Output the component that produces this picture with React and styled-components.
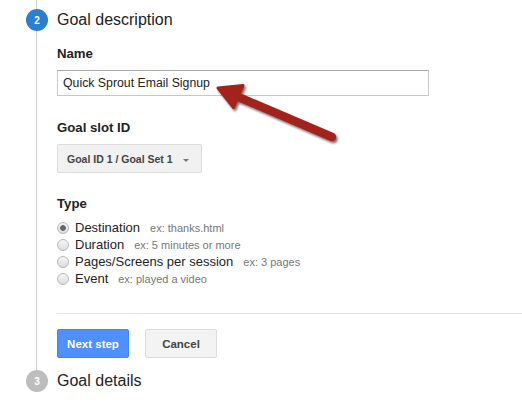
import styled, { createGlobalStyle } from 'styled-components'

const GlobalStyle = createGlobalStyle`
  html, body {
    margin: 0;
    padding: 0;
    background: #fff;
  }
  body {
    font-family: 'Liberation Sans', Arial, sans-serif;
    color: #222;
  }
`

const types = [
  { label: 'Destination', hint: 'ex: thanks.html', checked: true },
  { label: 'Duration', hint: 'ex: 5 minutes or more' },
  { label: 'Pages/Screens per session', hint: 'ex: 3 pages' },
  { label: 'Event', hint: 'ex: played a video' },
]

const Arrow = () => (
  <S.ArrowSvg width="522" height="404" viewBox="0 0 522 404">
    <defs>
      <filter id="shadow" x="-20%" y="-20%" width="140%" height="140%">
        <feDropShadow dx="1.5" dy="2" stdDeviation="1.3" floodColor="#000" floodOpacity="0.55" />
      </filter>
    </defs>
    <g filter="url(#shadow)" fill="#a3231f" stroke="#a3231f">
      <line x1="332" y1="137" x2="236" y2="96" strokeWidth="8.5" strokeLinecap="round" />
      <polygon points="218,88 243,85.6 233.5,107.6" strokeWidth="3" strokeLinejoin="round" />
    </g>
  </S.ArrowSvg>
)

export default () => {
  return (
    <S.Page>
      <GlobalStyle />
      <S.Stub />
      <S.StepHeader>
        <S.Circle active>2</S.Circle>
        <S.StepTitle>Goal description</S.StepTitle>
      </S.StepHeader>
      <S.StepBody>
        <S.Label>Name</S.Label>
        <S.Input>Quick Sprout Email Signup</S.Input>

        <S.Label top={24}>Goal slot ID</S.Label>
        <S.Select>
          <span>Goal ID 1 / Goal Set 1</span>
          <S.Caret />
        </S.Select>

        <S.Label top={23}>Type</S.Label>
        <S.RadioList>
          {types.map((t) => (
            <S.RadioRow key={t.label}>
              <S.Radio checked={t.checked} />
              <S.RadioLabel>{t.label}</S.RadioLabel>
              <S.Hint>{t.hint}</S.Hint>
            </S.RadioRow>
          ))}
        </S.RadioList>

        <S.Divider />

        <S.Buttons>
          <S.Button primary>Next step</S.Button>
          <S.Button>Cancel</S.Button>
        </S.Buttons>
      </S.StepBody>
      <S.StepHeader>
        <S.Circle>3</S.Circle>
        <S.StepTitle>Goal details</S.StepTitle>
      </S.StepHeader>
      <Arrow />
    </S.Page>
  )
}

const S = {
  Page: styled.div`
    position: relative;
    width: 522px;
    height: 404px;
    overflow: hidden;
  `,
  Stub: styled.div`
    height: 9px;
    margin-left: 36px;
    border-left: 1px solid #cfcfcf;
  `,
  StepHeader: styled.div`
    display: flex;
    align-items: center;
    height: 22px;
    padding-left: 26px;
  `,
  Circle: styled.div`
    width: 22px;
    height: 22px;
    border-radius: 50%;
    background: ${(props) => (props.active ? '#2a7fd2' : '#bdbdbd')};
    color: #fff;
    font-size: 10px;
    font-weight: bold;
    display: flex;
    align-items: center;
    justify-content: center;
    flex-shrink: 0;
  `,
  StepTitle: styled.div`
    margin-left: 9px;
    font-size: 16px;
    color: #222;
    line-height: 22px;
  `,
  StepBody: styled.div`
    margin-left: 36px;
    border-left: 1px solid #cfcfcf;
    padding: 15px 0 12px 20px;
    display: flex;
    flex-direction: column;
  `,
  Label: styled.div`
    margin-top: ${(props) => props.top || 0}px;
    margin-bottom: 8px;
    font-size: 13.2px;
    font-weight: bold;
    line-height: 16px;
    color: #222;
  `,
  Input: styled.div`
    box-sizing: border-box;
    width: 372px;
    height: 26px;
    border: 1px solid #c8c8c8;
    border-top-color: #a8a8a8;
    padding: 0 5px;
    font-size: 12.3px;
    line-height: 24px;
    color: #222;
  `,
  Select: styled.div`
    box-sizing: border-box;
    width: 145px;
    height: 29px;
    display: flex;
    align-items: center;
    justify-content: space-between;
    padding: 0 12px 0 9px;
    background: #f1f1f1;
    border: 1px solid #dcdcdc;
    border-radius: 2px;
    font-size: 10.5px;
    font-weight: bold;
    color: #444;
  `,
  Caret: styled.span`
    width: 0;
    height: 0;
    border-left: 3.5px solid transparent;
    border-right: 3.5px solid transparent;
    border-top: 3.5px solid #777;
    margin-top: 3px;
  `,
  RadioList: styled.div`
    display: flex;
    flex-direction: column;
    margin-top: -1px;
  `,
  RadioRow: styled.div`
    display: flex;
    align-items: baseline;
    height: 17px;
    line-height: 17px;
  `,
  Radio: styled.span`
    box-sizing: border-box;
    width: 12px;
    height: 12px;
    border-radius: 50%;
    border: 1px solid #b8b8b8;
    background: ${(props) =>
      props.checked
        ? 'radial-gradient(circle, #666 0, #666 2.5px, transparent 3.2px), linear-gradient(#f6f6f6, #dcdcdc)'
        : 'linear-gradient(#f6f6f6, #dcdcdc)'};
    align-self: center;
    flex-shrink: 0;
    margin-right: 6px;
  `,
  RadioLabel: styled.span`
    font-size: 13px;
    color: #222;
  `,
  Hint: styled.span`
    margin-left: 10px;
    font-size: 11px;
    color: #777;
  `,
  Divider: styled.div`
    margin-top: 26px;
    height: 1px;
    background: #e5e5e5;
    margin-right: -20px;
  `,
  Buttons: styled.div`
    display: flex;
    gap: 16px;
    margin-top: 15px;
  `,
  Button: styled.div`
    box-sizing: border-box;
    width: 72px;
    height: 29px;
    display: flex;
    align-items: center;
    justify-content: center;
    border-radius: 2px;
    font-size: 11.5px;
    font-weight: bold;
    color: ${(props) => (props.primary ? '#fff' : '#444')};
    background: ${(props) => (props.primary ? '#4d90fe' : '#f3f3f3')};
    border: 1px solid ${(props) => (props.primary ? '#3f85f5' : '#dcdcdc')};
  `,
  ArrowSvg: styled.svg`
    position: absolute;
    top: 0;
    left: 0;
    pointer-events: none;
  `,
}
